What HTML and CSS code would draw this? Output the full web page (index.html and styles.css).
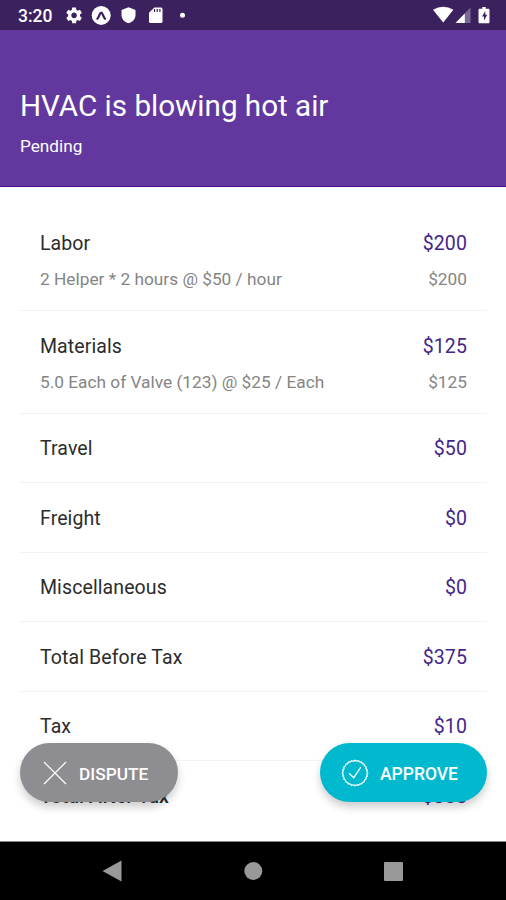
FILE: index.html
```html
<!DOCTYPE html>
<html lang="en">
<head>
<meta charset="utf-8">
<title>HVAC is blowing hot air</title>
<link rel="stylesheet" href="styles.css">
</head>
<body>
<div class="screen">
  <div class="status">
    <span class="clock">3:20</span>
    <svg class="left-icons" width="126" height="30" viewBox="62 0 126 30">
      <g transform="translate(64.6 5.9) scale(.79)" fill="#fff"><path d="M19.43 12.98c.04-.32.07-.64.07-.98s-.03-.66-.07-.98l2.11-1.65c.19-.15.24-.42.12-.64l-2-3.46c-.12-.22-.39-.3-.61-.22l-2.49 1c-.52-.4-1.08-.73-1.69-.98l-.38-2.65C14.46 2.18 14.25 2 14 2h-4c-.25 0-.46.18-.49.42l-.38 2.65c-.61.25-1.17.59-1.69.98l-2.49-1c-.23-.09-.49 0-.61.22l-2 3.46c-.13.22-.07.49.12.64l2.11 1.65c-.04.32-.07.65-.07.98s.03.66.07.98l-2.11 1.65c-.19.15-.24.42-.12.64l2 3.46c.12.22.39.3.61.22l2.49-1c.52.4 1.08.73 1.69.98l.38 2.65c.03.24.24.42.49.42h4c.25 0 .46-.18.49-.42l.38-2.65c.61-.25 1.17-.59 1.69-.98l2.49 1c.23.09.49 0 .61-.22l2-3.46c.12-.22.07-.49-.12-.64l-2.11-1.65zM12 15.5c-1.93 0-3.5-1.57-3.5-3.5s1.57-3.5 3.5-3.5 3.5 1.57 3.500 3.500-1.570 3.500-3.500 3.500z"/></g>
      <circle cx="101.2" cy="15.4" r="9.5" fill="#fff"/>
      <path d="M97.4 18.700c1.800-2 2.400-6 3.800-6s2 4 3.800 6" fill="none" stroke="#3c215f" stroke-width="2.300" stroke-linecap="round"/>
      <path d="M128.500 7.300l7 2.600v5c0 4-2.900 7-7 8.400-4.100-1.400-7-4.400-7-8.400v-5z" fill="#fff"/>
      <path d="M154.300 7.500h6.700q1.500 0 1.500 1.500v12.500q0 1.500-1.500 1.500h-10.500q-1.500 0-1.500-1.500v-8.700z" fill="#fff"/>
      <path d="M154.500 9v3M157.200 9v3M159.900 9v3" stroke="#3c215f" stroke-width="1.200"/>
      <circle cx="182.500" cy="15.200" r="2.500" fill="#fff"/>
    </svg>
    <svg class="right-icons" width="62" height="30" viewBox="432 0 62 30">
      <path d="M433 9.800q10.200-6.300 20.400 0L443.200 22.600z" fill="#fff"/>
      <path d="M470.500 7.500V23H455.500z" fill="#7a6894"/>
      <path d="M464.800 13.400V23H455.500z" fill="#fff"/>
      <path d="M482.300 7h3.400v1.700h2.800q1 0 1 1V22q0 1.300-1 1.300h-9q-1 0-1-1.300V9.700q0-1 1-1h2.800z" fill="#fff"/>
      <path d="M485.300 11l-3.300 5.500h2v4l3.300-5.700h-2z" fill="#3c215f"/>
    </svg>
  </div>
  <header class="header">
    <h1 class="title">HVAC is blowing hot air</h1>
    <p class="state">Pending</p>
  </header>
  <main class="list">
    <section class="item">
      <div class="row"><span>Labor</span><span class="amount">$200</span></div>
      <div class="row detail"><span>2 Helper * 2 hours @ $50 / hour</span><span>$200</span></div>
    </section>
    <section class="item">
      <div class="row"><span>Materials</span><span class="amount">$125</span></div>
      <div class="row detail"><span>5.0 Each of Valve (123) @ $25 / Each</span><span>$125</span></div>
    </section>
    <section class="item"><div class="row"><span>Travel</span><span class="amount">$50</span></div></section>
    <section class="item"><div class="row"><span>Freight</span><span class="amount">$0</span></div></section>
    <section class="item"><div class="row"><span>Miscellaneous</span><span class="amount">$0</span></div></section>
    <section class="item"><div class="row"><span>Total Before Tax</span><span class="amount">$375</span></div></section>
    <section class="item"><div class="row"><span>Tax</span><span class="amount">$10</span></div></section>
    <section class="item grand"><div class="row"><span>Total After Tax</span><span class="amount">$385</span></div></section>
  </main>
  <div class="actions">
    <button class="action dispute">
      <svg width="24" height="24" viewBox="0 0 24 24"><path d="M1 1l22 22M23 1L1 23" fill="none" stroke="#fff" stroke-width="1.200"/></svg>
      <span>DISPUTE</span>
    </button>
    <button class="action approve">
      <svg width="28" height="28" viewBox="0 0 28 28" fill="none" stroke="#fff" stroke-width="1.300" stroke-linecap="round" stroke-linejoin="round"><path d="M14 1.200q1.700 1.600 3.300.5 1.200 1.900 3.100 1.300.7 2.200 2.700 2.200 0 2.200 2 2.700-.6 2.100 1.200 3.100-1.100 1.700.5 3-1.600 1.300-.5 3-1.800 1-1.200 3.100-2 .5-2 2.700-2 0-2.700 2.200-1.900-.6-3.100 1.300-1.600-1.100-3.300.5-1.700-1.600-3.300-.5-1.200-1.900-3.100-1.300-.7-2.200-2.700-2.200 0-2.200-2-2.700.6-2.100-1.200-3.100 1.100-1.700-.5-3 1.600-1.300.5-3 1.800-1 1.200-3.100 2-.5 2-2.700 2 0 2.700-2.200 1.900.6 3.100-1.300 1.600 1.100 3.300-.5z"/><path d="M8.500 14.700l4.300 4 6.700-10"/></svg>
      <span>APPROVE</span>
    </button>
  </div>
  <nav class="nav">
    <svg width="506" height="58" viewBox="0 842 506 58" fill="#999">
      <path d="M102.500 871L121.500 860.500V881.500z"/><circle cx="253.300" cy="871" r="9"/><rect x="384" y="862" width="19" height="19" rx="1"/>
    </svg>
  </nav>
</div>
</body>
</html>
```

FILE: styles.css
```css
* { box-sizing: border-box; }
body { margin: 0; font-family: Roboto, sans-serif; background: #fff; }
.screen { position: relative; width: 506px; height: 900px; display: flex; flex-direction: column; overflow: hidden; }
.status { height: 30px; flex: none; display: flex; align-items: center; background: #3c215f; color: #fff; padding: 0 12px 0 18px; }
.clock { width: 44px; font-size: 17.500px; font-weight: 500; line-height: 30px; padding-top: 2px; }
.right-icons { margin-left: auto; }
.status svg, .nav svg { display: block; }
.header { height: 157px; flex: none; background: #62389f; border-bottom: 1px solid #4b0b8c; color: #fff; padding: 58px 20px 0; }
.title { margin: 0; font-size: 29.600px; line-height: 36px; font-weight: 400; white-space: nowrap; }
.state { margin: 11px 0 0; font-size: 17.200px; line-height: 22px; }
.list { flex: 1; min-height: 0; overflow: hidden; padding: 21.500px 19px 0 20px; }
.item { padding: 23.500px 20px 22px; border-bottom: 1px solid #f3f3f3; }
.row { display: flex; justify-content: space-between; font-size: 19.500px; line-height: 23px; letter-spacing: .1px; color: #2c2c2c; white-space: nowrap; }
.amount { color: #43268a; }
.detail { margin-top: 14px; margin-bottom: -1px; font-size: 17.300px; line-height: 20px; letter-spacing: 0; color: #858585; }
.grand { border: 0; }
.grand .row { font-weight: 500; }
.actions { position: absolute; left: 20px; right: 19px; bottom: 98px; display: flex; justify-content: space-between; }
.action { height: 59px; border: 0; border-radius: 30px; display: flex; align-items: center; color: #fff; font: 500 17.300px/22px Roboto, sans-serif; box-shadow: 0 5px 8px rgba(0,0,0,.2); }
.action span { padding-top: 2px; }
.dispute { width: 158px; background: #8e8d92; padding: 0 0 0 23px; gap: 12px; }
.approve { width: 167px; background: #00b9cf; padding: 0 0 0 21px; gap: 11px; font-size: 17.500px; }
.nav { height: 58px; flex: none; background: #000; box-shadow: 0 -1px #888; }
```
